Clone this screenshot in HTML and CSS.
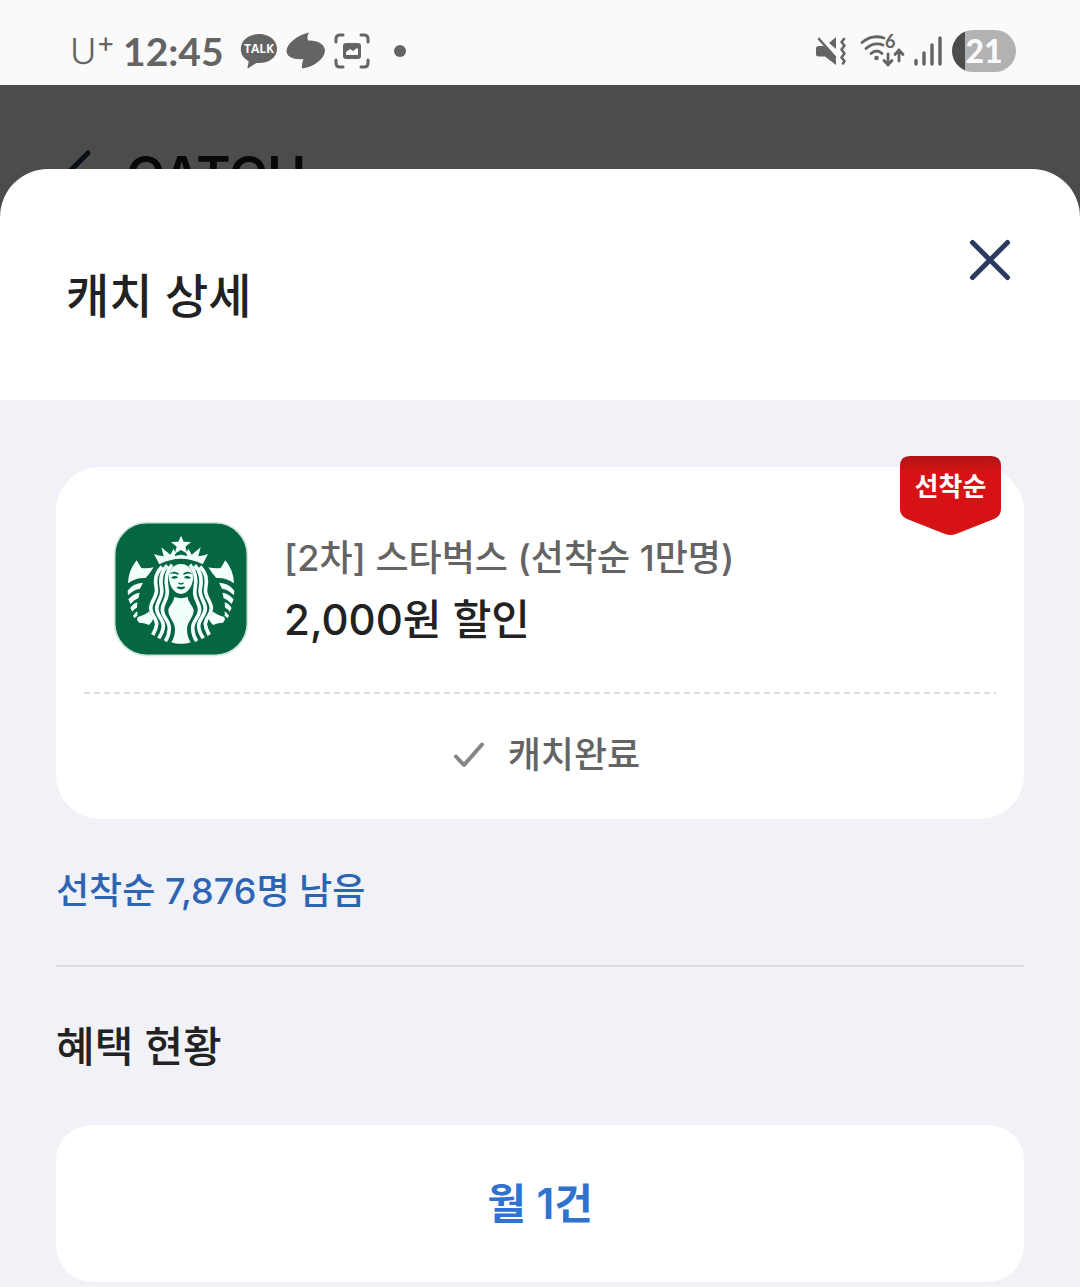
FILE: index.html
```html
<!DOCTYPE html>
<html lang="ko">
<head>
<meta charset="utf-8">
<meta name="viewport" content="width=device-width, initial-scale=1">
<title>캐치 상세</title>
<link rel="stylesheet" href="styles.css">
</head>
<body>
<div class="statusbar">
  <div class="status-group status-left">
    <span class="carrier">U<sup>+</sup></span>
    <time class="clock">12:45</time>
    <svg class="talk" width="38" height="36" viewBox="0 0 38 36" aria-label="TALK">
      <path fill="#646464" d="M19 1C8.500 1 .8 7.500.8 16c0 5.500 3.200 9.800 8 12.300L7.500 34.500c-.1.700.5 1 1 .6L16.500 30c.8.1 1.600.1 2.500.1 10.500 0 18-6.100 18-14.300S29.500 1 19 1z"/>
      <text class="talk-text" x="19" y="20" text-anchor="middle">TALK</text>
    </svg>
    <svg width="40" height="38" viewBox="0 0 40 38" aria-hidden="true"><path fill="#646464" d="M23 .5C21.500 3 21 6 22 8.500 31 8 39 12 39 19 38 28 27 35 16 36.500c-.5-3 .5-7 1.500-9.500C8 28 .5 25 .5 19 1 11 12 3 23 .5z"/></svg>
    <svg width="36" height="36" viewBox="0 0 36 36" aria-hidden="true">
      <path fill="none" stroke="#646464" stroke-width="3" stroke-linecap="round" d="M2 9V6q0-4 4-4h3M27 2h3q4 0 4 4v3M34 27v3q0 4-4 4h-3M9 34H6q-4 0-4-4v-3"/>
      <rect x="9" y="10" width="18" height="16" rx="3" fill="#646464"/>
      <path fill="#fafafa" d="M12 22v-3l4-3 3 2 4-3 1 1v6z"/>
    </svg>
    <span class="dot"></span>
  </div>
  <div class="status-group status-right">
    <svg width="34" height="32" viewBox="0 0 34 32" aria-hidden="true">
      <path fill="#646464" d="M0 13.500Q0 11 2.500 11H8l12 13v6L9 21.500H2.500Q0 21.500 0 19zM13 8l7-6v12z"/>
      <path fill="none" stroke="#646464" stroke-width="2.600" stroke-linecap="round" stroke-linejoin="round" d="M3 4 19 22M28 4l-2.500 3 3 3.500-3 4 3 4-3 4 3 3.500-1.500 2.500"/>
    </svg>
    <svg class="wifi" width="44" height="36" viewBox="1 0 44 36" aria-hidden="true">
      <g fill="none" stroke="#646464" stroke-width="2.800" stroke-linecap="round">
        <path d="M3 9.500Q13 1 25 5M7 15.500q8-7 17-3.500M12 20.500q6-5 11 0"/>
        <path d="M29 21v10.500m-4-4 4 4.500 4-4.500M40 28V17.500m-4 4 4-4.500 4 4.500"/>
      </g>
      <circle cx="17.500" cy="25" r="2.300" fill="#646464"/>
      <text class="wifi-text" x="26" y="15">6</text>
    </svg>
    <svg width="28" height="32" viewBox="0 0 28 32" aria-hidden="true"><path fill="none" stroke="#646464" stroke-width="3.400" stroke-linecap="round" d="M2 25.500v3.500M10 18v11M18 10v19M26 3v26"/></svg>
    <span class="battery">21</span>
  </div>
</div>

<header class="appbar">
  <svg width="24" height="50" viewBox="0 0 24 50" aria-hidden="true"><path fill="none" stroke="#0b0d1b" stroke-width="5" stroke-linecap="round" stroke-linejoin="round" d="M21 3 2 22l19 20"/></svg>
  <span class="appbar-title">CATCH</span>
</header>

<main class="sheet">
  <div class="sheet-head">
    <h1 class="sheet-title">캐치 상세</h1>
    <button class="close" type="button" aria-label="닫기">
      <svg width="48" height="48" viewBox="0 0 48 48" aria-hidden="true"><path fill="none" stroke="#2b3a60" stroke-width="5" stroke-linecap="round" d="M6.500 6.500l35 35m0-35-35 35"/></svg>
    </button>
  </div>

  <div class="sheet-body">
    <article class="coupon">
      <div class="badge">
        <svg class="badge-shape" width="101" height="80" viewBox="0 0 101 80" aria-hidden="true">
          <defs><linearGradient id="red" x1="0" y1="0" x2="0" y2="1"><stop offset="0" stop-color="#b01417"/><stop offset=".2" stop-color="#d61214"/></linearGradient></defs>
          <path fill="url(#red)" d="M10 0h81q10 0 10 10v43q0 7-7 10L56 78q-5.500 2-11 0L7 63q-7-3-7-10V10Q0 0 10 0z"/>
        </svg>
        <span class="badge-text">선착순</span>
      </div>
      <div class="coupon-main">
        <svg class="logo" width="134" height="134" viewBox="40 36 402 402" role="img" aria-label="스타벅스">
          <rect x="42" y="38" width="398" height="398" rx="96" fill="#056642" stroke="#cfe5dc" stroke-width="5"/>
          <g fill="#f2fffa">
            <path d="M241 77l8 18 22 1-17 14 6 21-19-11-19 11 6-21-17-14 22-1z"/>
            <path d="M176 163L160 132q14 6 29 7l-7-27 27 22 10-18 6 14-3 8 19-4 19 4-3-8 6-14 10 18 27-22-7 27q15-1 29-7l-16 31Q241 130 176 163z"/>
            <path d="M241 162c-24 0-37 20-36 43 1 26 18 47 36 47s35-21 36-47c1-23-12-43-36-43z"/>
            <path d="M221 261c-3 20-18 28-18 41 1 22 20 33 20 56 0 17-5 30-11 39 18 6 40 6 58 0-6-9-11-22-11-39 0-23 19-34 20-56 0-13-15-21-18-41q-20 7-40 0z"/>
          </g>
          <g id="side">
            <path fill="none" stroke="#f2fffa" stroke-width="11" d="M184 170c-19 18-22 42-17 65 5 24-17 37-17 60 1 22 19 29 18 48-1 14-7 23-12 32M200 166c-20 20-22 46-17 70 5 25-15 38-15 60 1 24 21 31 20 53-1 14-8 27-14 36M214 164c-18 22-20 49-15 73 6 28-15 42-14 63 1 24 22 31 21 57-1 15-6 28-12 37"/>
            <path fill="#f2fffa" d="M108 151l14 23q20 2 37-2-10 17-24 32-28-2-53 16 1-39 26-69zM81 242q15-23 46-24l-9 18q-20 3-36 20zM83 268q13-17 34-20l-4 17q-13 4-24 17zM89 294q8-13 21-17l-1 16q-9 3-14 12zM97 318q4-9 13-14v14q-5 1-8 7zM111 321q20-4 35-17 3 13 14 19-6 12-15 22-15-7-30-7l-6-9z"/>
            <path fill="#056642" d="M207 192q12-12 27-2l-1 5q-14-7-26-3zM211 203q10-10 22-1-11 8-22 1z"/>
          </g>
          <use href="#side" transform="matrix(-1 0 0 1 482 0)"/>
          <path fill="#056642" d="M234 217q7 6 14 0l1 4q-8 5-16 0zM227 232q7-5 14-1 7-4 14 1-14 13-28 0z"/>
        </svg>
        <div class="coupon-text">
          <p class="coupon-name">[2차] 스타벅스 (선착순 1만명)</p>
          <h2 class="coupon-benefit">2,000원 할인</h2>
        </div>
      </div>
      <div class="coupon-state">
        <svg width="30" height="26" viewBox="0 0 30 26" aria-hidden="true"><path fill="none" stroke="#858585" stroke-width="4" stroke-linecap="round" stroke-linejoin="round" d="M2 14.500 10 23 28 2.500"/></svg>
        <span>캐치완료</span>
      </div>
    </article>
    <p class="remaining">선착순 7,876명 남음</p>
    <section class="benefits">
      <h2 class="section-title">혜택 현황</h2>
      <div class="benefit-card">월 1건</div>
    </section>
  </div>
</main>
</body>
</html>
```
FILE: styles.css
```css
* {
  box-sizing: border-box;
}

body {
  margin: 0;
  background: #f1f2f8;
  color: #222;
  font-family: Inter, "Noto Sans CJK KR", sans-serif;
}

h1,
h2,
p {
  margin: 0;
}

svg {
  display: block;
  flex: none;
  overflow: visible;
}

.statusbar {
  display: flex;
  justify-content: space-between;
  padding: 30px 64px 13px 70px;
  background: #fafafa;
  color: #646464;
}

.status-group {
  display: flex;
  align-items: center;
  height: 42px;
}

.status-left {
  gap: 8px;
}

.status-right {
  gap: 10px;
}

.carrier {
  font-size: 36px;
  font-weight: 300;
  line-height: 42px;
}

.carrier sup {
  font-size: 28px;
  font-weight: 400;
  line-height: 0;
  vertical-align: 12px;
}

.clock {
  margin-right: 8px;
  font-family: Lato, sans-serif;
  font-size: 39px;
  font-weight: 700;
  line-height: 42px;
}

.talk-text {
  fill: #fafafa;
  font-family: "Open Sans", sans-serif;
  font-size: 12px;
  font-weight: 700;
}

.wifi-text {
  fill: #646464;
  font-family: Lato, sans-serif;
  font-size: 18px;
  font-weight: 700;
}

.dot {
  width: 12px;
  height: 12px;
  margin-left: 16px;
  border-radius: 50%;
  background: #646464;
}

.battery {
  width: 64px;
  height: 42px;
  border-radius: 21px;
  background: linear-gradient(to right, #4c4c4c 13px, #b2b2b2 13px);
  color: #fafafa;
  font-family: Lato, sans-serif;
  font-size: 32px;
  font-weight: 900;
  line-height: 42px;
  text-align: center;
}

.appbar {
  display: flex;
  align-items: center;
  gap: 35px;
  height: 180px;
  padding: 0 67px;
  background: #4c4c4c;
  color: #080808;
}

.appbar-title {
  font-size: 52px;
  font-weight: 600;
}

.sheet {
  position: relative;
  margin-top: -96px;
  border-radius: 48px 48px 0 0;
  background: #fff;
}

.sheet-head {
  display: flex;
  justify-content: space-between;
  align-items: flex-start;
  padding: 67px 66px 68px;
}

.sheet-title {
  margin-top: 24px;
  font-size: 47px;
  font-weight: 500;
  line-height: 72px;
}

.close {
  padding: 0;
  border: 0;
  background: none;
}

.sheet-body {
  padding: 67px 56px 5px;
  background: #f1f2f8;
}

.coupon {
  position: relative;
  padding: 0 28px;
  border-radius: 44px;
  background: #fff;
}

.badge {
  position: absolute;
  top: -11px;
  right: 23px;
}

.badge-text {
  position: absolute;
  top: 0;
  left: 0;
  width: 100%;
  color: #fff;
  font-size: 26px;
  font-weight: 700;
  line-height: 62px;
  text-align: center;
}

.coupon-main {
  display: flex;
  align-items: center;
  gap: 36px;
  padding: 55px 30px 36px;
}

.coupon-name {
  color: #646464;
  font-size: 36px;
  font-weight: 500;
  line-height: 62px;
}

.coupon-benefit {
  font-size: 42px;
  font-weight: 500;
  line-height: 62px;
}

.coupon-state {
  display: flex;
  justify-content: center;
  align-items: center;
  gap: 24px;
  padding: 31px 0 32px 14px;
  background: repeating-linear-gradient(to right, #dcdcdc 0 6px, transparent 6px 10px) top / 100% 2px no-repeat;
  color: #646464;
  font-size: 36px;
  font-weight: 500;
  line-height: 64px;
}

.remaining {
  padding: 48px 0 50px;
  border-bottom: 2px solid #d9dbe0;
  color: #2d64b3;
  font-size: 36px;
  font-weight: 500;
  line-height: 48px;
}

.section-title {
  padding: 50px 0 48px;
  font-size: 42px;
  font-weight: 500;
  line-height: 60px;
}

.benefit-card {
  padding: 48px;
  border-radius: 36px;
  background: #fff;
  color: #2f73cf;
  font-size: 42px;
  font-weight: 600;
  line-height: 61px;
  text-align: center;
}
```
